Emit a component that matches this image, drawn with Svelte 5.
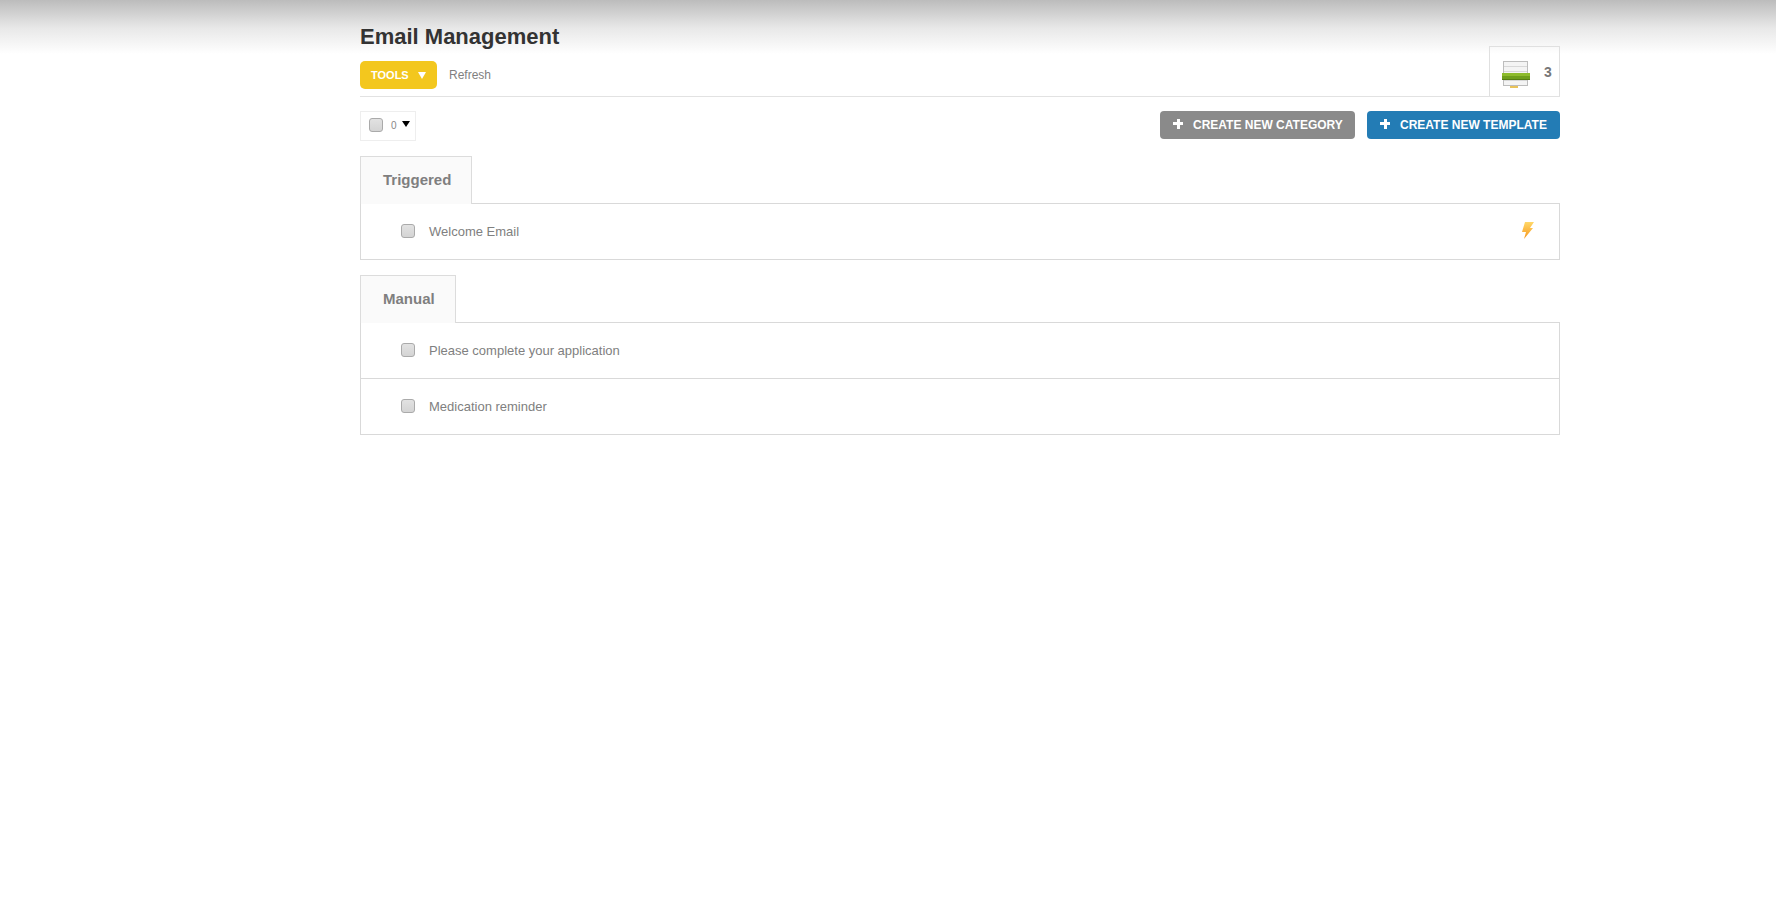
<script>
  const groups = [
    { name: 'Triggered', items: [{ title: 'Welcome Email', triggered: true }] },
    { name: 'Manual', items: [{ title: 'Please complete your application' }, { title: 'Medication reminder' }] }
  ];
</script>

<div class="page">
  <div class="wrap">
    <header>
      <div class="head-left">
        <h1>Email Management</h1>
        <div class="tools-row">
          <button class="tools">TOOLS <span class="tri"></span></button>
          <a href="#refresh">Refresh</a>
        </div>
      </div>
      <div class="counter">
        <svg width="30" height="28" viewBox="0 0 30 28">
          <rect x="9" y="26" width="8" height="2" fill="#e8c25a" />
          <rect x="2.5" y="1.5" width="24" height="24" fill="#f4f4f4" stroke="#bdbdbd" />
          <path d="M3 6.500h23M3 11.500h23M3 20.500h23" stroke="#d8d8d8" />
          <rect x="1" y="13" width="28" height="7" fill="#6f9e1c" />
          <rect x="1" y="13" width="28" height="3" fill="#8dbb2c" />
          <rect x="1" y="19" width="28" height="1" fill="#557d12" />
        </svg>
        <span>3</span>
      </div>
    </header>

    <div class="actions">
      <div class="select-box">
        <span class="check"></span>
        <span class="zero">0</span>
        <span class="tri-black"></span>
      </div>
      <div class="buttons">
        <button class="create gray"><span class="plus"></span>CREATE NEW CATEGORY</button>
        <button class="create blue"><span class="plus"></span>CREATE NEW TEMPLATE</button>
      </div>
    </div>

    {#each groups as group}
      <section>
        <div class="tab">{group.name}</div>
        <div class="panel">
          {#each group.items as item}
            <div class="row">
              <span class="check"></span>
              <span class="title">{item.title}</span>
              {#if item.triggered}
                <svg class="bolt" width="14" height="20" viewBox="0 0 14 20">
                  <defs>
                    <linearGradient id="boltfill" x1="0" y1="0" x2="0" y2="1">
                      <stop offset="0" stop-color="#ffd869" />
                      <stop offset="1" stop-color="#f6961c" />
                    </linearGradient>
                  </defs>
                  <path d="M4 1h9L9 7h3L3 18l2-7H1z" fill="url(#boltfill)" />
                </svg>
              {/if}
            </div>
          {/each}
        </div>
      </section>
    {/each}
  </div>
</div>

<style>
  :global(body) {
    margin: 0;
    background: #fff;
    font-family: "Liberation Sans", Arial, sans-serif;
  }

  .page {
    min-height: 901px;
    background: linear-gradient(#bcbcbc 0, #e8e8e8 28px, #fff 54px) no-repeat;
  }

  .wrap {
    width: 1200px;
    margin-left: 360px;
  }

  header {
    display: flex;
    justify-content: space-between;
    height: 96px;
    border-bottom: 1px solid #e2e2e2;
  }

  h1 {
    margin: 0;
    padding-top: 24px;
    font-size: 22px;
    line-height: 26px;
    color: #333;
  }

  .tools-row {
    display: flex;
    align-items: center;
    gap: 12px;
    margin-top: 11px;
  }

  .tools {
    display: flex;
    align-items: center;
    gap: 9px;
    width: 77px;
    height: 28px;
    padding: 0 0 0 11px;
    border: 0;
    border-radius: 5px;
    background: #f3c71e;
    color: #fff;
    font: bold 11px "Liberation Sans", Arial, sans-serif;
  }

  .tri {
    border-left: 4px solid transparent;
    border-right: 4px solid transparent;
    border-top: 7px solid #fff;
  }

  a {
    font-size: 12px;
    color: #808080;
    text-decoration: none;
  }

  .counter {
    display: flex;
    align-items: center;
    gap: 13px;
    box-sizing: border-box;
    width: 71px;
    height: 50px;
    margin-top: 46px;
    padding: 4px 0 0 11px;
    border: 1px solid #e0e0e0;
    border-bottom: 0;
    font-size: 14px;
    font-weight: bold;
    color: #777;
  }

  .counter span {
    margin-top: -4px;
  }

  .actions {
    display: flex;
    justify-content: space-between;
    margin-top: 14px;
  }

  .select-box {
    display: flex;
    align-items: center;
    box-sizing: border-box;
    width: 56px;
    height: 30px;
    padding: 0 0 2px 8px;
    border: 1px solid #eee;
  }

  .zero {
    margin-left: 8px;
    font-size: 10px;
    color: #888;
  }

  .tri-black {
    margin: -3px 0 0 5px;
    border-left: 4px solid transparent;
    border-right: 4px solid transparent;
    border-top: 6px solid #000;
  }

  .check {
    flex: none;
    box-sizing: border-box;
    width: 14px;
    height: 14px;
    border: 1px solid #aaa;
    border-radius: 3px;
    background: linear-gradient(#e2e2e2, #d4d4d4);
  }

  .buttons {
    display: flex;
    gap: 12px;
  }

  .create {
    display: flex;
    align-items: center;
    height: 28px;
    padding: 0 0 0 13px;
    border: 0;
    border-radius: 4px;
    color: #fff;
    font: bold 12px "Liberation Sans", Arial, sans-serif;
    white-space: nowrap;
  }

  .gray {
    width: 195px;
    background: #8a8a8a;
  }

  .blue {
    width: 193px;
    background: #237cb5;
  }

  .plus {
    flex: none;
    width: 10px;
    height: 10px;
    margin: -3px 10px 0 0;
    background: linear-gradient(#fff, #fff) center / 10px 3px no-repeat,
      linear-gradient(#fff, #fff) center / 3px 10px no-repeat;
  }

  section {
    margin-top: 15px;
  }

  .tab {
    position: relative;
    z-index: 1;
    display: inline-block;
    box-sizing: border-box;
    height: 48px;
    margin-bottom: -1px;
    padding: 0 20px 0 22px;
    border: 1px solid #dcdcdc;
    border-bottom: 0;
    background: #fafafa;
    font-size: 15px;
    font-weight: bold;
    line-height: 46px;
    color: #7f7f7f;
    vertical-align: top;
  }

  .panel {
    border: 1px solid #d9d9d9;
  }

  .row {
    display: flex;
    align-items: center;
    height: 55px;
    padding-left: 40px;
    padding-right: 24px;
  }

  .row + .row {
    border-top: 1px solid #d9d9d9;
  }

  .row .check {
    margin-top: -2px;
  }

  .title {
    margin-left: 14px;
    font-size: 13px;
    color: #808080;
  }

  .bolt {
    margin-left: auto;
    margin-top: -2px;
  }
</style>
